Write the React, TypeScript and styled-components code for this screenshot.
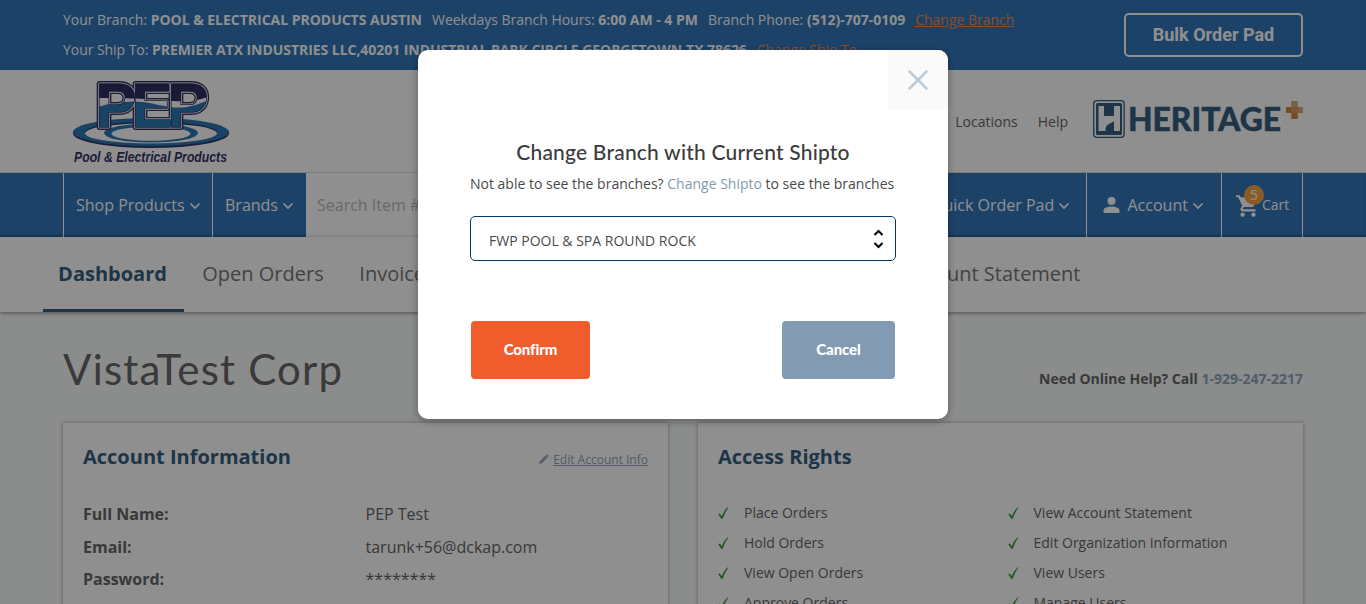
import React from "react";
import styled, { createGlobalStyle } from "styled-components";

const Global = createGlobalStyle`
  * { box-sizing: border-box; }
  body { margin: 0; overflow: hidden; background: #f8faf9; font-family: "Open Sans", "Noto Sans", sans-serif; font-size: 14px; color: #666; }
`;

const Page = styled.div`
  height: 604px;
  overflow: hidden;
`;
const TopBar = styled.div`
  height: 70px;
  background: #3476ba;
  color: #fff;
  padding: 5px 63px;
  display: flex;
  justify-content: space-between;
`;
const InfoLine = styled.div<{ $spacing: number }>`
  display: flex;
  gap: 10px;
  height: 30px;
  line-height: 30px;
  white-space: nowrap;
  letter-spacing: ${(p) => p.$spacing}px;
`;
const OrangeLink = styled.a`
  color: #ec8d4c;
  text-decoration: underline;
`;
const BulkButton = styled.button`
  width: 179px;
  height: 44px;
  margin-top: 8px;
  border: 2px solid #fff;
  border-radius: 5px;
  background: transparent;
  color: #fff;
  font: 700 18px Roboto, sans-serif;
  padding: 0 0 2px;
`;
const Header = styled.header`
  height: 103px;
  background: #fff;
  padding: 0 62px 0 70px;
  display: flex;
  justify-content: space-between;
  border-bottom: 1px solid #ddd;
`;
const HeaderRight = styled.div`
  display: flex;
  align-items: center;
  gap: 20px;
  color: #666;
`;
const Logo = styled.svg`
  display: block;
  flex: none;
`;
const HeritageMark = styled(Logo)`
  margin: -4px 0 0 5px;
`;
const Nav = styled.nav`
  height: 64px;
  background: #3476ba;
  color: #fff;
  padding: 0 63px;
  display: flex;
  font-size: 16px;
  box-shadow: inset 0 -2px 2px rgba(0, 0, 0, 0.15);
`;
const NavItem = styled.div<{ $w: number; $pad?: number; $last?: boolean }>`
  width: ${(p) => p.$w}px;
  padding-left: ${(p) => p.$pad ?? 12}px;
  border-left: 1px solid #fff;
  border-right: ${(p) => (p.$last ? "1px solid #fff" : "0")};
  display: flex;
  align-items: center;
  white-space: nowrap;
  flex: none;
`;
const Search = styled.div`
  flex: 1;
  background: #fff;
  color: #bbb;
  padding-left: 11px;
  line-height: 64px;
`;
const ChevronIcon = styled.svg`
  margin: 2px 0 0 4px;
`;
const PersonIcon = styled.svg`
  margin-right: 7.5px;
`;
const CartIcon = styled.div`
  position: relative;
  height: 24px;
`;
const Badge = styled.span`
  position: absolute;
  left: 9px;
  top: -8px;
  width: 20px;
  height: 20px;
  border-radius: 50%;
  background: #f3a440;
  font-size: 14px;
  line-height: 20px;
  text-align: center;
`;
const CartText = styled.span`
  font-size: 14px;
  margin: -2px 0 0 1px;
`;
const Tabs = styled.div`
  height: 75px;
  background: #fff;
  padding: 0 43px;
  display: flex;
  font-size: 20px;
  color: #777;
  position: relative;
  box-shadow: 0 1px 4px rgba(0, 0, 0, 0.45);
`;
const Tab = styled.div<{ $active?: boolean; $w: number; $end?: boolean }>`
  width: ${(p) => p.$w}px;
  height: 75px;
  line-height: 74px;
  padding-right: ${(p) => (p.$active ? 2 : 0)}px;
  white-space: nowrap;
  text-align: ${(p) => (p.$end ? "right" : "center")};
  font-weight: ${(p) => (p.$active ? 700 : 400)};
  color: ${(p) => (p.$active ? "#365e80" : "#777")};
  border-bottom: 3px solid ${(p) => (p.$active ? "#365e80" : "transparent")};
`;
const Content = styled.main`
  padding: 0 63px;
`;
const TitleRow = styled.div`
  height: 111px;
  display: flex;
  justify-content: space-between;
  align-items: flex-start;
`;
const Title = styled.h1`
  margin: 29px 0 0;
  font: 400 42px/56px Lato, sans-serif;
  letter-spacing: 1.2px;
  color: #686868;
`;
const HelpLine = styled.div`
  margin-top: 57px;
  font-weight: 700;
  line-height: 20px;
  color: #666;
`;
const Phone = styled.span`
  color: #8fa5b8;
`;
const Cards = styled.div`
  display: flex;
  justify-content: space-between;
`;
const Card = styled.section`
  width: 605px;
  height: 260px;
  background: #fff;
  padding: 20px;
  box-shadow: 0 0 4px rgba(0, 0, 0, 0.35);
`;
const CardHead = styled.div`
  display: flex;
  justify-content: space-between;
  align-items: center;
  height: 28px;
`;
const CardTitle = styled.h2`
  margin: 0;
  font-size: 20px;
  line-height: 28px;
  font-weight: 700;
  color: #365e80;
`;
const EditLink = styled.a`
  display: flex;
  align-items: center;
  gap: 4px;
  margin-top: 4px;
  font-size: 12px;
  color: #8fa5b8;
  text-decoration: underline;
`;
const InfoGrid = styled.dl`
  margin: 27px 0 0;
  display: grid;
  grid-template-columns: 282.5px 1fr;
  grid-auto-rows: 32.5px;
  line-height: 32px;
  font-size: 16px;
`;
const Term = styled.dt`
  font-weight: 700;
`;
const Value = styled.dd`
  margin: 0;
`;
const Rights = styled.div`
  margin-top: 27px;
  display: grid;
  grid-template-columns: 289.5px 1fr;
  grid-auto-rows: 30px;
`;
const Right = styled.div`
  display: flex;
  align-items: center;
  gap: 15px;
  line-height: 30px;
`;
const Overlay = styled.div`
  position: fixed;
  inset: 0;
  background: rgba(0, 0, 0, 0.44);
  display: flex;
  justify-content: center;
  align-items: flex-start;
  padding-top: 50px;
`;
const Modal = styled.div`
  position: relative;
  width: 530px;
  height: 369px;
  border-radius: 10px;
  background: #fff;
  overflow: hidden;
  padding: 87px 52px 0;
  color: #4a4a4a;
`;
const ModalShadow = styled.div`
  border-radius: 10px;
  box-shadow: 0 2px 8px rgba(0, 0, 0, 0.35);
`;
const Close = styled.button`
  position: absolute;
  top: 0;
  right: 0;
  width: 60px;
  height: 60px;
  border: 0;
  padding: 0;
  background: #fafafa;
  display: flex;
  align-items: center;
  justify-content: center;
`;
const ModalTitle = styled.h3`
  margin: 0;
  text-align: center;
  font: 500 21px/30px Lato, sans-serif;
  letter-spacing: 0.2px;
  white-space: nowrap;
  color: #3c3c3c;
`;
const ModalText = styled.p`
  margin: 7px 0 0;
  line-height: 20px;
  white-space: nowrap;
`;
const ModalLink = styled.a`
  color: #829bb3;
`;
const Select = styled.div`
  margin-top: 22px;
  width: 426px;
  height: 45px;
  border: 1px solid #003865;
  border-radius: 5px;
  padding: 4px 11px 0 18px;
  display: flex;
  align-items: center;
  justify-content: space-between;
`;
const Arrows = styled.svg`
  margin-top: -4px;
`;
const Actions = styled.div`
  margin: 60px 1px 0;
  display: flex;
  justify-content: space-between;
`;
const Action = styled.button<{ $bg: string; $w: number }>`
  width: ${(p) => p.$w}px;
  height: 58px;
  border: 0;
  border-radius: 4px;
  background: ${(p) => p.$bg};
  color: #fff;
  font: 900 15px Lato, sans-serif;
  letter-spacing: -0.1px;
  padding: 0 0 2px;
`;

const Chevron = () => (
  <ChevronIcon width="12" height="8" viewBox="0 0 12 8">
    <path d="M1.500 1.500 6 6l4.500-4.500" fill="none" stroke="#fff" strokeWidth="1.700" />
  </ChevronIcon>
);
const Check = () => (
  <svg width="11" height="12" viewBox="0 0 11 12">
    <path d="M.3 7.200 1.800 6.500 3.800 9.200C5.200 5.800 7 2.800 9.800.3L10.500.6C8 3.800 6.300 7.300 4.800 11.700H3.200Z" fill="#379a3c" />
  </svg>
);

const PepWord = (props: React.SVGProps<SVGTextElement>) => (
  <text x="95.500" y="126.500" textLength="108" lengthAdjust="spacingAndGlyphs" fontFamily="Liberation Sans, sans-serif" fontWeight="700" fontSize="63" letterSpacing="-5" {...props}>PEP</text>
);

const PepLogo = () => (
  <Logo width="164" height="102" viewBox="70 70 164 102">
    <defs>
      <clipPath id="pepWord"><PepWord /></clipPath>
    </defs>
    <ellipse cx="151" cy="133.500" rx="78" ry="14.500" fill="#353568" />
    <ellipse cx="151" cy="132" rx="78" ry="14" fill="#2e78b4" />
    <ellipse cx="151" cy="132.500" rx="66" ry="10.800" fill="#353568" />
    <ellipse cx="151" cy="133.300" rx="66" ry="10.200" fill="#fff" />
    <ellipse cx="151" cy="133" rx="47" ry="9.500" fill="#2e78b4" />
    <ellipse cx="151" cy="133.800" rx="39.500" ry="7" fill="#fff" />
    <g strokeLinejoin="round">
      <PepWord fill="none" stroke="#353568" strokeWidth="6" />
      <PepWord fill="#fff" stroke="#fff" strokeWidth="3.200" />
      <PepWord fill="none" stroke="#353568" strokeWidth="1.600" />
    </g>
    <g clipPath="url(#pepWord)">
      <rect x="90" y="76" width="120" height="56" fill="#2e78b4" />
      <path d="M90 76h120v23c-14 7-26 10-40 8-18-3-28-7-46-5-13 1-21 3-34 8z" fill="#fff" />
      <path d="M90 76h120v20c-10 5-24 6-38 5-20-2-40-3-82-3z" fill="#2f2f60" />
    </g>
    <text x="74" y="162" textLength="153" lengthAdjust="spacingAndGlyphs" fontFamily="Liberation Sans, sans-serif" fontWeight="700" fontStyle="italic" fontSize="14.500" fill="#353568">Pool &amp; Electrical Products</text>
  </Logo>
);

const HeritageLogo = () => (
  <HeritageMark width="211" height="40" viewBox="1093 99 211 40">
    <rect x="1093.700" y="100.700" width="30.400" height="36.600" rx="3" fill="none" stroke="#365e80" strokeWidth="1.300" />
    <rect x="1096" y="103" width="26" height="32" rx="1.500" fill="#365e80" />
    <path d="M1098.500 106h5.500v10h10v-10h6v25h-21.500z" fill="#fff" />
    <path d="M1114 121.500c-4 2-7 3-8 5.500-.6 1.600-.5 3 0 4.500h8z" fill="#365e80" />
    <text x="1128" y="131" textLength="153" lengthAdjust="spacingAndGlyphs" fontFamily="Lato, sans-serif" fontWeight="900" fontSize="33" fill="#365e80" stroke="#365e80" strokeWidth=".5">HERITAGE</text>
    <path d="M1286 107h5.500v-6h6v6h5.500v6h-5.500v6h-6v-6h-5.500z" fill="#d09a60" />
    <path d="M1286 107h5.500v6h6v6h-6v-6h-5.500z" fill="#d9843a" />
    <path d="M1291.500 101h6v6h-6zM1297.500 107h5.500v6h-5.500z" fill="#d9a974" />
  </HeritageMark>
);

const details = [
  ["Full Name:", "PEP Test"],
  ["Email:", "tarunk+56@dckap.com"],
  ["Password:", "********"],
];
const rights = [
  "Place Orders", "View Account Statement",
  "Hold Orders", "Edit Organization Information",
  "View Open Orders", "View Users",
  "Approve Orders", "Manage Users",
];

export default function App() {
  return (
    <>
      <Global />
      <Page>
        <TopBar>
          <div>
            <InfoLine $spacing={-0.02}>
              <span>Your Branch: <b>POOL &amp; ELECTRICAL PRODUCTS AUSTIN</b></span>
              <span>Weekdays Branch Hours: <b>6:00 AM - 4 PM</b></span>
              <span>Branch Phone: <b>(512)-707-0109</b></span>
              <OrangeLink>Change Branch</OrangeLink>
            </InfoLine>
            <InfoLine $spacing={-0.05}>
              <span>Your Ship To: <b>PREMIER ATX INDUSTRIES LLC,40201 INDUSTRIAL PARK CIRCLE GEORGETOWN,TX 78626</b></span>
              <OrangeLink>Change Ship To</OrangeLink>
            </InfoLine>
          </div>
          <BulkButton>Bulk Order Pad</BulkButton>
        </TopBar>
        <Header>
          <PepLogo />
          <HeaderRight>
            <span>Locations</span>
            <span>Help</span>
            <HeritageLogo />
          </HeaderRight>
        </Header>
        <Nav>
          <NavItem $w={149}>Shop Products<Chevron /></NavItem>
          <NavItem $w={94}>Brands<Chevron /></NavItem>
          <Search>Search Item #</Search>
          <NavItem $w={167} $pad={11}>Quick Order Pad<Chevron /></NavItem>
          <NavItem $w={135} $pad={16}>
            <PersonIcon width="17" height="16" viewBox="0 0 17 16">
              <circle cx="8.500" cy="4" r="4" fill="#fff" />
              <path d="M.5 16v-2.500C.5 10.500 5 9.500 8.500 9.500s8 1 8 4V16z" fill="#fff" />
            </PersonIcon>
            Account<Chevron />
          </NavItem>
          <NavItem $w={82} $pad={13} $last>
            <CartIcon>
              <svg width="26" height="26" viewBox="0 0 24 24">
                <path fill="#fff" d="M7 18c-1.100 0-1.990.9-1.990 2S5.900 22 7 22s2-.9 2-2-.9-2-2-2zM1 2v2h2l3.600 7.590-1.350 2.450c-.16.280-.25.610-.25.960 0 1.100.9 2 2 2h12v-2H7.420c-.14 0-.25-.11-.25-.25l.03-.12.900-1.630h7.450c.75 0 1.410-.41 1.750-1.030l3.580-6.490A1 1 0 0 0 20 4H5.210l-.94-2H1zm16 16c-1.100 0-1.990.9-1.990 2s.89 2 1.990 2 2-.9 2-2-.9-2-2-2z" />
              </svg>
              <Badge>5</Badge>
            </CartIcon>
            <CartText>Cart</CartText>
          </NavItem>
        </Nav>
        <Tabs>
          <Tab $w={141} $active>Dashboard</Tab>
          <Tab $w={158}>Open Orders</Tab>
          <Tab $w={110}>Invoices</Tab>
          <Tab $w={628.5} $end>Account Statement</Tab>
        </Tabs>
        <Content>
          <TitleRow>
            <Title>VistaTest Corp</Title>
            <HelpLine>Need Online Help? Call <Phone>1-929-247-2217</Phone></HelpLine>
          </TitleRow>
          <Cards>
            <Card>
              <CardHead>
                <CardTitle>Account Information</CardTitle>
                <EditLink>
                  <svg width="10" height="10" viewBox="0 0 11 11"><path d="M.5 10.500 1.200 8 7.300 1.900l1.800 1.800L3 9.800zM8 1.200l.8-.8 1.800 1.800-.8.8z" fill="#8fa5b8" stroke="#8fa5b8" strokeWidth=".5" /></svg>
                  Edit Account Info
                </EditLink>
              </CardHead>
              <InfoGrid>
                {details.map(([k, v]) => (
                  <React.Fragment key={k}>
                    <Term>{k}</Term>
                    <Value>{v}</Value>
                  </React.Fragment>
                ))}
              </InfoGrid>
            </Card>
            <Card>
              <CardHead><CardTitle>Access Rights</CardTitle></CardHead>
              <Rights>
                {rights.map((r) => <Right key={r}><Check />{r}</Right>)}
              </Rights>
            </Card>
          </Cards>
        </Content>
      </Page>
      <Overlay>
        <ModalShadow>
          <Modal>
            <Close aria-label="Close">
              <svg width="20" height="20" viewBox="0 0 20 20"><path d="M1.500 1.500l17 17M18.500 1.500l-17 17" stroke="#bccbd8" strokeWidth="2.500" strokeLinecap="round" /></svg>
            </Close>
            <ModalTitle>Change Branch with Current Shipto</ModalTitle>
            <ModalText>Not able to see the branches? <ModalLink>Change Shipto</ModalLink> to see the branches</ModalText>
            <Select>
              FWP POOL &amp; SPA ROUND ROCK
              <Arrows width="11" height="20" viewBox="0 0 11 20"><path d="M1.500 6 5.500 2l4 4M1.500 14l4 4 4-4" fill="none" stroke="#000" strokeWidth="2" /></Arrows>
            </Select>
            <Actions>
              <Action $bg="#f05c2c" $w={119}>Confirm</Action>
              <Action $bg="#829bb3" $w={113}>Cancel</Action>
            </Actions>
          </Modal>
        </ModalShadow>
      </Overlay>
    </>
  );
}
